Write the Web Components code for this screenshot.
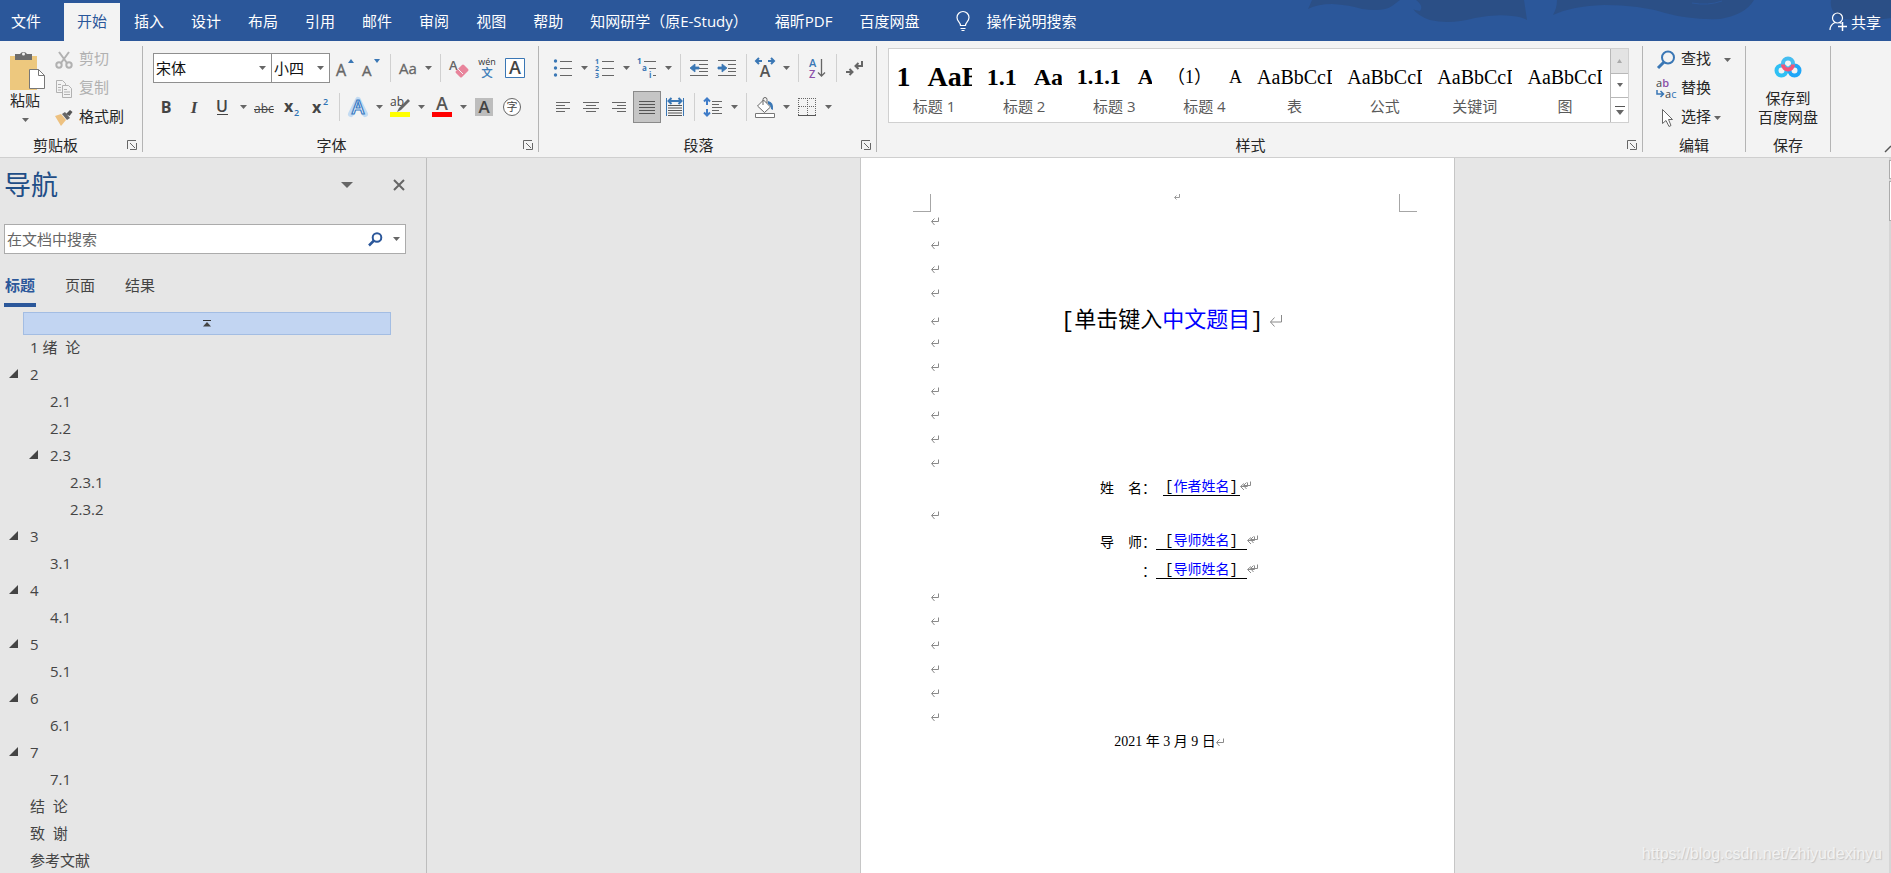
<!DOCTYPE html>
<html lang="zh-CN">
<head>
<meta charset="utf-8">
<title>Word</title>
<style>
  html, body { margin: 0; height: 100%; }
  body { overflow: hidden; font: 15px/20px "Open Sans", "Noto Sans CJK SC", sans-serif; color: #262626; background: #e6e6e6; }
</style>
</head>
<body>
<word-app></word-app>

<script>
const ARROW = '<path d="M0 0h7L3.5 4z" fill="#666"/>';

/* Icon drawings: [width, height, markup] */
const ICONS = {
  arrow: [7, 4, ARROW],
  paste: [36, 40, '<path d="M0 6h27v34H0z" fill="#edc87e"/><path d="M5 4h5a4 4 0 0 1 7 0h5v6H5z" fill="#6d6d6d"/><circle cx="13.500" cy="4" r="1.500" fill="#f3f3f3"/><path d="M19.500 19.500h9l6 6v13h-15z" fill="#fff" stroke="#777"/><path d="M28.500 19.500v6h6" fill="none" stroke="#777"/>'],
  cut: [18, 18, '<g fill="none" stroke="#b1b1b1" stroke-width="2"><path d="M4 1l8 11M14 1L6 12"/><circle cx="4" cy="14" r="2.700"/><circle cx="14" cy="14" r="2.700"/></g>'],
  copy: [18, 18, '<g fill="#f3f3f3" stroke="#b1b1b1"><path d="M1.500.5h6l3 3v9h-9z"/><path d="M7.500 5.500h6l3 3v9h-9z"/><path d="M3 4.500h3M3 7.500h3M3 10h3M9 9.500h3M9 12h6M9 14.500h6"/></g>'],
  brush: [18, 16, '<path d="M0 6l6-2 5 6-5 6z" fill="#edc180"/><path d="M7 4l3-2 5 6-3 2z" fill="#666"/><path d="M11 4l4-4 2.500 2-3 4z" fill="#555"/>'],
  grow: [20, 20, '<text x="0" y="18" font-size="16" fill="#666" stroke="#666" stroke-width=".4">A</text><path d="M12 5h6l-3-4z" fill="#3a77b5"/>'],
  shrink: [20, 20, '<text x="0" y="18" font-size="15" fill="#666" stroke="#666" stroke-width=".4">A</text><path d="M12 1h6l-3 4z" fill="#3a77b5"/>'],
  aa: [22, 20, '<text x="2" y="16" font-size="15" fill="#666" stroke="#666" stroke-width=".3">Aa</text>'],
  eraser: [20, 20, '<text x="0" y="12" font-size="13" font-weight="600" fill="#666">A</text><path d="M8 14l6-6 4 4-6 6z" fill="#e8849b" stroke="#e8849b" stroke-width="3" stroke-linejoin="round"/><path d="M8.500 10.500l5.500 5.500" stroke="#f3f3f3"/>'],
  pinyin: [20, 22, '<text x="10" y="8" text-anchor="middle" font-size="9" fill="#333">wén</text><text x="10" y="20" text-anchor="middle" font-size="11" fill="#2f74b5" stroke="#2f74b5" stroke-width=".3">文</text>'],
  boxa: [20, 20, '<path d="M.5.5h19v19H.500z" fill="#fff" stroke="#3a77b5"/><text x="10" y="16" text-anchor="middle" font-size="18" font-weight="600" fill="#444">A</text>'],
  bold: [20, 20, '<text x="10" y="16" text-anchor="middle" font-size="16" font-weight="700" fill="#444">B</text>'],
  italic: [20, 20, '<text x="10" y="16" text-anchor="middle" font-size="17" font-weight="700" font-style="italic" font-family="Liberation Serif" fill="#444">I</text>'],
  under: [20, 20, '<text x="10" y="15" text-anchor="middle" font-size="16" font-weight="600" fill="#444">U</text><path d="M5 17.500h11" stroke="#444"/>'],
  strike: [22, 20, '<text x="11" y="16" text-anchor="middle" font-size="12" fill="#444">abc</text><path d="M1 12.500h20" stroke="#444"/>'],
  sub: [20, 20, '<text x="2" y="15" font-size="16" font-weight="700" fill="#444">x</text><text x="12" y="19" font-size="9" font-weight="600" fill="#2f74b5">2</text>'],
  sup: [20, 20, '<text x="2" y="16" font-size="16" font-weight="700" fill="#444">x</text><text x="13" y="8" font-size="9" font-weight="600" fill="#2f74b5">2</text>'],
  effect: [22, 22, '<path d="M4 18L11 4l7 14" fill="none" stroke="#c3dbf2" stroke-width="6" stroke-linejoin="round" stroke-linecap="round"/><text x="11" y="18" text-anchor="middle" font-size="19" font-weight="600" fill="#fff" stroke="#3b7cc4" stroke-width="1.200">A</text>'],
  marker: [22, 22, '<text x="1" y="10" font-size="12" fill="#444">ab</text><path d="M19 3l2 2-9 9-4 2 2-4z" fill="#666"/><path d="M1 16h20v5H1z" fill="#ff0"/>'],
  color: [22, 22, '<text x="11" y="14" text-anchor="middle" font-size="18" font-weight="600" fill="#555">A</text><path d="M1 16h20v5H1z" fill="red"/>'],
  shade: [18, 18, '<path d="M0 0h18v18H0z" fill="#bdbdbd"/><text x="9" y="15" text-anchor="middle" font-size="17" font-weight="600" fill="#444">A</text>'],
  circled: [20, 20, '<circle cx="10" cy="10" r="8.500" fill="#fff" stroke="#666"/><text x="10" y="14" text-anchor="middle" font-size="11" fill="#444">字</text>'],
  bullets: [20, 20, '<g fill="#3a77b5"><circle cx="2.500" cy="3" r="1.700"/><circle cx="2.500" cy="10" r="1.700"/><circle cx="2.500" cy="17" r="1.700"/></g><path d="M7 3.500h12M7 10.500h12M7 17.500h12" stroke="#666"/>'],
  numbers: [20, 20, '<g font-size="7" font-weight="700" fill="#3a77b5"><text x="0" y="6">1</text><text x="0" y="13">2</text><text x="0" y="20">3</text></g><path d="M7 3.500h12M7 10.500h12M7 17.500h12" stroke="#666"/>'],
  multi: [20, 20, '<g font-size="8" font-weight="700" fill="#3a77b5"><text x="0" y="6">1</text><text x="5" y="13">a</text><text x="12" y="20">i</text></g><path d="M7 3.500h12M12 10.500h7M16 17.500h3" stroke="#666"/>'],
  outdent: [20, 20, '<path d="M1 2.500h18M10 6.500h9M10 10.500h9M10 13.500h9M1 17.500h18" stroke="#666"/><path d="M1 10l5-4v3h4v2H6v3z" fill="#3a77b5" stroke="#3a77b5" stroke-width=".8"/>'],
  indent: [20, 20, '<path d="M1 2.500h18M11 6.500h8M11 10.500h8M11 13.500h8M1 17.500h18" stroke="#666"/><path d="M10 10L5 6v3H1v2h4v3z" fill="#3a77b5" stroke="#3a77b5" stroke-width=".8"/>'],
  cnlayout: [22, 20, '<text x="11" y="19" text-anchor="middle" font-size="16" font-weight="600" fill="#555">A</text><path d="M5 0L2 3l3 3M2 3h6M17 0l3 3-3 3M20 3h-6" fill="none" stroke="#3a77b5" stroke-width="2"/>'],
  sort: [20, 22, '<text x="2" y="10" font-size="11" font-weight="600" fill="#3a77b5">A</text><text x="2" y="21" font-size="11" font-weight="600" fill="#8b4fa8">Z</text><path d="M14.500 2v17M11 15.500l3.500 3.500 3.500-3.500" fill="none" stroke="#666" stroke-width="1.300"/>'],
  marks: [20, 18, '<path d="M17 2v5h-6M13.500 4l-3 3 3 3M1 13h6M4.500 10l3 3-3 3" fill="none" stroke="#666" stroke-width="2"/>'],
  left: [20, 20, '<path d="M3 5.500h14M3 8.500h9M3 11.500h14M3 14.500h9" stroke="#666"/>'],
  center: [20, 20, '<path d="M2 5.500h16M5 8.500h10M2 11.500h16M5 14.500h10" stroke="#666"/>'],
  right: [20, 20, '<path d="M3 5.500h14M8 8.500h9M3 11.500h14M8 14.500h9" stroke="#666"/>'],
  justify: [20, 20, '<path d="M2 4.500h16M2 7.500h16M2 10.500h16M2 13.500h16M2 16.500h16" stroke="#555"/>'],
  spread: [20, 20, '<path d="M1.500 1v18M18.500 1v18" stroke="#3a77b5"/><path d="M3 4h14M6.500 1L3.500 4l3 3M13.500 1l3 3-3 3" fill="none" stroke="#3a77b5" stroke-width="2"/><path d="M3 8.500h14M3 11h14M3 13.500h14M3 16h14M3 18.500h14" stroke="#555"/>'],
  spacing: [20, 20, '<path d="M4 1v7M4 12v7M1 4.500L4 1.500l3 3M1 15.500l3 3 3-3" fill="none" stroke="#3f7cc8" stroke-width="2"/><path d="M9 4.500h10M9 7.500h7M9 10.500h10M9 13.500h7M9 16.500h10" stroke="#666"/>'],
  fill: [22, 22, '<path d="M9.500 4l7 7-6 5.500-7-6.500z" fill="#fff" stroke="#666"/><path d="M9 9V3.500a2 2 0 0 1 4 0V7" fill="none" stroke="#666"/><path d="M14 5q6 1 5 9l-2-1q0-4-3-5z" fill="#3a77b5"/><path d="M1.500 17.500h19v4h-19z" fill="#fff" stroke="#777"/>'],
  borders: [20, 20, '<path d="M2 1.500h17M1.500 1v17M18.500 1v17M10.500 1v17M2 9.500h17" stroke="#666" stroke-dasharray="1 1"/><path d="M1 18.500h18" stroke="#555"/>'],
  find: [20, 20, '<circle cx="12" cy="7.500" r="6" fill="none" stroke="#3a77b5" stroke-width="2"/><path d="M8 12l-6 6" stroke="#3a77b5" stroke-width="3"/>'],
  replace: [20, 20, '<text x="0" y="8" font-size="11" fill="#444">a<tspan fill="#8b4fa8" font-weight="600">b</tspan></text><text x="9" y="19" font-size="11" fill="#444">a<tspan fill="#2f74b5">c</tspan></text><path d="M1 11v4h6M4.500 12l3 3-3 3" fill="none" stroke="#3a77b5" stroke-width="1.500"/>'],
  select: [20, 20, '<path d="M6.500 1.500v14l3.500-3 3 6 2-1-2.500-6h4z" fill="#fff" stroke="#666"/>'],
  netdisk: [28, 22, '<g fill="none" stroke-width="4"><circle cx="7.500" cy="14.500" r="5" stroke="#2fc0f4"/><circle cx="20.500" cy="14.500" r="5" stroke="#1fa6f8"/><circle cx="14" cy="7.500" r="5" stroke="#45bdf0"/><path d="M9 8.500a5 5 0 0 0 10 0" stroke="#f25478"/></g>'],
  bulb: [14, 20, '<path d="M4.500 14.500C4.500 11 1 10.500 1 6.500a6 6 0 0 1 12 0c0 4-3.500 4.500-3.500 8zM4.500 17.500h5M5.500 19.500h3" fill="none" stroke="#fff" stroke-width="1.200"/>'],
  share: [18, 20, '<circle cx="8.500" cy="6" r="5" fill="none" stroke="#fff" stroke-width="1.200"/><path d="M1 18c0-4 2-6 5-7.500M10.500 10.500l2 1" fill="none" stroke="#fff" stroke-width="1.200"/><path d="M9 14.500h9M13.500 10v9" stroke="#fff" stroke-width="1.500"/>'],
  launcher: [10, 10, '<path d="M.5 9V.5H9M3 3l5 5M9.500 3v6.500H3" fill="none" stroke="#666"/>'],
  navarrow: [12, 6, '<path d="M0 0h12L6 6z" fill="#666"/>'],
  close: [12, 12, '<path d="M1 1l10 10M11 1L1 11" stroke="#666" stroke-width="2"/>'],
  search: [15, 15, '<circle cx="9" cy="5.500" r="4.300" fill="none" stroke="#2b579a" stroke-width="2"/><path d="M6 8.500L1 13.500" stroke="#2b579a" stroke-width="2.500"/>'],
  totop: [8, 7, '<path d="M0 .5h8" stroke="#333"/><path d="M0 6.500L4 2l4 4.500z" fill="#444"/>'],
  twisty: [10, 10, '<path d="M0 9L9 0v9z" fill="#444"/>'],
  ret: [9, 9, '<path d="M7.500.5v4H1M3.500 1.500l-3 3 3 3.500" fill="none" stroke="#8a8a8a"/>'],
  retbig: [14, 14, '<path d="M12.500 1v7H1.500M5.500 3.500L1.500 8l4 4.500" fill="none" stroke="#8a8a8a"/>'],
  retsmall: [6, 6, '<path d="M5.500 0v3.500H1M2.500 1.500l-2 2 2 2" fill="none" stroke="#9a9a9a"/>'],
  ret2: [11, 10, '<path d="M7.500 1.500v4H1M4 2.500l-3.500 3L4 9M10.500.5v4H4M6.500 1.500l-3 3 3 3.500" fill="none" stroke="#8a8a8a"/>'],
  tickup: [5, 4, '<path d="M0 4h5L2.500 0z" fill="#aaa"/>'],
  tickdown: [6, 4, '<path d="M0 0h6L3 4z" fill="#666"/>'],
  tickmore: [10, 9, '<path d="M0 .5h10" stroke="#555"/><path d="M1 4h8L5 9z" fill="#666"/>'],
  chevron: [6, 6, '<path d="M0 6L6 0" stroke="#555" stroke-width="1.500"/>']
};
const icon = n => { const [w, h, d] = ICONS[n]; return `<svg width="${w}" height="${h}" viewBox="0 0 ${w} ${h}" aria-hidden="true">${d}</svg>`; };

const BASE = `*{box-sizing:border-box}svg{display:block;flex:none;overflow:visible}
button{font:inherit;color:inherit;background:none;border:0;margin:0;padding:0;display:flex;align-items:center;justify-content:center}
a{color:inherit;text-decoration:none}`;

function define(tag, css, html) {
  customElements.define(tag, class extends HTMLElement {
    constructor() { super(); this.attachShadow({ mode: 'open' }); }
    connectedCallback() {
      this.shadowRoot.innerHTML = `<style>${BASE}${css}</style>` + (typeof html === 'function' ? html(this) : html);
    }
  });
}
const at = (el, n) => el.getAttribute(n) || '';

/* Small ribbon controls */
define('tool-button', `:host{display:block;width:26px;height:30px}
:host([icon=arrow]){width:12px}
:host([narrow]){width:24px}
button{width:100%;height:100%}
:host([pressed]) button{background:#c5c5c5;outline:1px solid #8a8a8a}`,
  el => `<button type="button" aria-label="${at(el, 'label')}">${icon(at(el, 'icon'))}</button>`);
define('tool-sep', `:host{display:flex;justify-content:center;width:8px;height:28px}i{width:1px;background:#d0d0d0}`, '<i></i>');
define('tool-text', `:host{display:block;height:27px;white-space:nowrap}
button{height:100%;gap:5px}
:host([disabled]){color:#b1b1b1}
.i{width:20px;display:flex;justify-content:center}
.t{padding-bottom:3px}
.a{margin-left:var(--arrow-gap,0)}`,
  el => `<button type="button"${el.hasAttribute('disabled') ? ' disabled' : ''}><span class="i">${icon(at(el, 'icon'))}</span><span class="t"><slot></slot></span>${el.hasAttribute('menu') ? `<span class="a">${icon('arrow')}</span>` : ''}</button>`);
define('combo-box', `:host{display:block;position:relative;height:30px}
select{appearance:none;font:inherit;color:#111;width:100%;height:100%;border:1px solid #8f8f8f;border-radius:0;background:#fff;padding:0 2px;margin:0;display:block}
svg{position:absolute;right:6px;top:13px;pointer-events:none}`,
  el => `<select aria-label="${at(el, 'label')}"><option>${at(el, 'value')}</option></select>${icon('arrow')}`);

define('ribbon-group', `:host{display:flex;flex-direction:column;border-right:1px solid #b4b4b4}
.body{flex:1;display:flex;min-height:0}
footer{display:flex;align-items:center;height:14px;line-height:14px}
footer span{flex:1;text-align:center}
footer button{width:18px;height:14px;padding-right:2px}
:host([flush]) footer span{padding-right:13px}`,
  el => `<div class="body"><slot></slot></div><footer><span>${at(el, 'name')}</span>${el.hasAttribute('dialog') ? `<button type="button" aria-label="${at(el, 'name')}设置">${icon('launcher')}</button>` : ''}</footer>`);

/* Tab strip */
define('tab-strip', `:host{display:flex;height:41px;background:#2b579a;color:#fff;position:relative;overflow:hidden}
.deco{position:absolute;right:0;top:0}
nav{display:flex;gap:1px;padding-top:3px;position:relative}
nav a{padding:0 13px;line-height:36px;white-space:nowrap}
nav a:first-child{padding:0 11px;margin-right:11px}
nav a.on{background:#f3f3f3;color:#2b579a}
.help,.share{display:flex;align-items:center;gap:16px;padding-top:1px;position:relative}
.help{margin-left:24px}
.share{margin-left:auto;gap:4px;padding-right:10px;padding-top:3px}`,
  () => `<svg class="deco" width="591" height="41" viewBox="1300 0 591 41" fill="#2b4f86"><path d="M1312 0Q1310 5 1308 9Q1318 4 1332 4Q1350 5 1362 9Q1384 12 1392 6L1400 0zM1416 0Q1424 6 1420 11Q1414 10 1413 9Q1418 16 1430 20Q1450 25 1475 18Q1495 14 1512 16Q1522 17 1527 20L1524 0zM1557 0Q1557 8 1553 15Q1572 6 1604 5Q1640 5 1665 13Q1690 20 1720 19Q1745 15 1754 0zM1831 0Q1829 14 1845 19Q1868 22 1891 18V0z"/><path d="M1692 3q16 3 30-2" stroke="#2b579a" stroke-width="1" fill="none"/></svg>
<nav>${['文件', '开始', '插入', '设计', '布局', '引用', '邮件', '审阅', '视图', '帮助', '知网研学（原E-Study）', '福昕PDF', '百度网盘'].map((t, i) => `<a href="#"${i === 1 ? ' class="on"' : ''}>${t}</a>`).join('')}</nav>
<button class="help" type="button">${icon('bulb')}<span>操作说明搜索</span></button>
<button class="share" type="button">${icon('share')}<span>共享</span></button>`);

/* Style gallery */
const STYLES = [['标题 1', 'b28', '1', 'AaB'], ['标题 2', 'b24', '1.1', 'Aa'], ['标题 3', 'b22', '1.1.1', 'A'], ['标题 4', 'r18', '（1）', 'A'], ['表', 'r20', '', 'AaBbCcD'], ['公式', 'r20', '', 'AaBbCcD'], ['关键词', 'r20', '', 'AaBbCcD'], ['图', 'r20', '', 'AaBbCcD']];
define('style-gallery', `:host{display:flex;flex:1;height:75px;border:1px solid #d0d0d0;background:#fff}
.items{flex:1;display:grid;grid-template-columns:repeat(8,1fr)}
.items button{display:block;padding:4px 7px 0}
.pv{display:flex;gap:17px;align-items:center;width:75px;height:36px;margin:0 auto;overflow:hidden;white-space:nowrap;line-height:36px;color:#000;font-family:"Liberation Serif","Noto Sans CJK SC",serif}
.b28{font-size:28px;font-weight:700}.b24{font-size:24px;font-weight:700}.b22{font-size:22px;font-weight:700}.r18{font-size:18px}.r20{font-size:20px}
.cap{display:block;line-height:22px;color:#5a5a5a}
.side{width:18px;display:grid;grid-template-rows:1fr 1fr 1fr;gap:1px;background:#b8b8b8;padding-left:1px}
.side button{background:#fff}.side button:first-child{background:#e3e3e3}`,
  () => `<div class="items">${STYLES.map(([c, k, n, t]) => `<button type="button"><span class="pv ${k}">${n ? `<span>${n}</span>` : ''}<span>${t}</span></span><span class="cap">${c}</span></button>`).join('')}</div>
<div class="side"><button type="button" aria-label="上一行">${icon('tickup')}</button><button type="button" aria-label="下一行">${icon('tickdown')}</button><button type="button" aria-label="其他">${icon('tickmore')}</button></div>`);

const tools = list => list.split(' ').map(n => n === '|' ? '<tool-sep></tool-sep>' : `<tool-button icon="${n.replace(/[*!]/, '')}" label="${n.replace(/[*!]/, '')}"${n.endsWith('*') ? ' narrow' : ''}${n.endsWith('!') ? ' pressed' : ''}></tool-button>`).join('');

define('ribbon-bar', `:host{display:flex;padding:5px 0;height:117px;background:#f3f3f3;border-bottom:1px solid #cfcfcf}
ribbon-group{flex:none}
.clip{width:143px}.font{width:396px}.para{width:338px}.style{flex:1}.edit{width:103px}.save{width:85px}
.rows{display:flex;flex-direction:column;gap:9px;padding-top:7px}
.row{display:flex;gap:2px;align-items:center}
.font .rows{padding-left:10px}
.para .rows{padding-left:11px}
.combos{display:flex;margin-right:2px}
.combos combo-box{width:59px;margin-left:-1px}.combos combo-box:first-child{width:119px;margin-left:0}
.paste{flex-direction:column;justify-content:flex-start;width:50px;padding-top:4px}
.paste svg:first-child{margin-left:6px}
.paste svg:last-child{margin-top:8px}
.col{display:flex;flex-direction:column;gap:2px;padding-left:4px}
.edit .col{padding-left:13px}.edit tool-text:first-child{--arrow-gap:8px}
.style-body{display:flex;flex:1;padding:2px 13px 0 11px}
.disk{flex:1;flex-direction:column;justify-content:flex-start;padding-top:10px;line-height:19px;gap:11px}
.end{width:60px;display:flex;align-items:flex-end;justify-content:flex-end}`,
  () => `<ribbon-group class="clip" name="剪贴板" dialog flush>
  <button class="paste" type="button">${icon('paste')}<span>粘贴</span>${icon('arrow')}</button>
  <div class="col"><tool-text icon="cut" disabled>剪切</tool-text><tool-text icon="copy" disabled>复制</tool-text><tool-text icon="brush">格式刷</tool-text></div>
</ribbon-group>
<ribbon-group class="font" name="字体" dialog><div class="rows">
  <div class="row"><div class="combos"><combo-box label="字体" value="宋体"></combo-box><combo-box label="字号" value="小四"></combo-box></div>${tools('grow* shrink* | aa* arrow | eraser pinyin boxa')}</div>
  <div class="row">${tools('bold italic under arrow strike sub sup | effect arrow marker arrow color arrow shade circled')}</div>
</div></ribbon-group>
<ribbon-group class="para" name="段落" dialog><div class="rows">
  <div class="row">${tools('bullets arrow numbers arrow multi arrow | outdent indent | cnlayout arrow | sort | marks')}</div>
  <div class="row">${tools('left center right justify! spread | spacing arrow | fill arrow borders arrow')}</div>
</div></ribbon-group>
<ribbon-group class="style" name="样式" dialog><div class="style-body"><style-gallery></style-gallery></div></ribbon-group>
<ribbon-group class="edit" name="编辑"><div class="col"><tool-text icon="find" menu>查找</tool-text><tool-text icon="replace">替换</tool-text><tool-text icon="select" menu style="--arrow-gap:-2px">选择</tool-text></div></ribbon-group>
<ribbon-group class="save" name="保存"><button class="disk" type="button">${icon('netdisk')}<span>保存到<br>百度网盘</span></button></ribbon-group>
<button class="end" type="button" aria-label="折叠功能区">${icon('chevron')}</button>`);

/* Navigation pane */
const TREE = [[1, '1 绪  论'], [1, '2', 1], [2, '2.1'], [2, '2.2'], [2, '2.3', 1], [3, '2.3.1'], [3, '2.3.2'], [1, '3', 1], [2, '3.1'], [1, '4', 1], [2, '4.1'], [1, '5', 1], [2, '5.1'], [1, '6', 1], [2, '6.1'], [1, '7', 1], [2, '7.1'], [1, '结  论'], [1, '致  谢'], [1, '参考文献']];
define('nav-pane', `:host{display:block;width:427px;flex:none;border-right:1px solid #bdbdbd;color:#444;overflow:hidden}
header{display:flex;align-items:center;height:54px;padding:0 21px 0 4px}
h2{flex:1;margin:0;font-size:27px;line-height:40px;font-weight:400;color:#1f4e87}
header button+button{margin-left:40px}
.search{display:flex;align-items:center;width:402px;height:30px;margin:12px 0 0 4px;border:1px solid #ababab;background:#fff;padding-right:5px}
input{flex:1;min-width:0;border:0;outline:0;padding:0 2px;font:inherit;background:none}
input::placeholder{color:#666;opacity:1}
.search button+button{margin-left:10px}
.tabs{display:flex;gap:28px;padding:21px 0 0 4px}
.tabs a{line-height:20px;padding:0 1px 8px;border-bottom:4px solid transparent}
.tabs a.on{color:#2b579a;font-weight:700;border-color:#2b579a}
.top{width:368px;height:23px;margin:5px 0 0 23px;background:#c2d5f2;border:1px solid #a3bde3}
ul{list-style:none;margin:-2px 0 0;padding:0}
li{display:flex;align-items:center;height:27px;white-space:pre}
li button,li i{width:10px;margin-right:11px}
.l1{padding-left:9px}.l2{padding-left:29px}.l3{padding-left:49px}`,
  () => `<header><h2>导航</h2><button type="button" aria-label="选项">${icon('navarrow')}</button><button type="button" aria-label="关闭">${icon('close')}</button></header>
<div class="search"><input type="text" aria-label="搜索" placeholder="在文档中搜索"><button type="button" aria-label="搜索">${icon('search')}</button><button type="button" aria-label="搜索选项">${icon('arrow')}</button></div>
<div class="tabs"><a href="#" class="on">标题</a><a href="#">页面</a><a href="#">结果</a></div>
<button class="top" type="button" aria-label="转到开头">${icon('totop')}</button>
<ul>${TREE.map(([l, t, x]) => `<li class="l${l}">${x ? `<button type="button" aria-label="折叠">${icon('twisty')}</button>` : '<i></i>'}<a href="#">${t}</a></li>`).join('')}</ul>`);

/* One line of the document: left paragraph mark, centred content, trailing mark */
define('doc-line', `:host{display:grid;grid-template-columns:1fr auto 1fr;align-items:center;height:24px}`,
  el => `<span>${el.hasAttribute('mark') ? icon('ret') : ''}</span><slot></slot><span>${at(el, 'end') ? icon(at(el, 'end')) : ''}</span>`);
define('form-line', `:host{display:flex;align-items:center;height:24px;padding-left:168px;color:#000;font-size:14px;line-height:16px}
.label{width:57px;text-align:right;white-space:pre}
.field{width:91px;height:17px;margin-top:-4px;text-align:center;border-bottom:1px solid #000;color:#00f;white-space:nowrap}
:host([short]) .field{width:77px;margin-left:7px}
b{font:14px/16px "Liberation Mono",monospace;color:#000}
svg{margin-top:-6px}`,
  el => `<span class="label">${at(el, 'label')}</span><span class="field"><b>[</b><slot></slot><b>]</b></span>${icon('ret2')}`);

define('doc-page', `:host{box-sizing:border-box;display:block;width:595px;background:#fff;border:1px solid #c6c6c6;border-width:0 1px;padding:36px 37px 0 52px}
.head{display:grid;grid-template-columns:18px 1fr 18px;height:18px}
.head i{border:0 solid #a6a6a6}
.head i:first-child{border-width:0 1px 1px 0}.head i:last-child{border-width:0 0 1px 1px}
.head span{display:flex;justify-content:center;padding-left:23px}
.text{margin:-3px 18px 0;font-family:"Liberation Serif","Noto Sans CJK SC",serif;color:#000}
.title{box-sizing:border-box;height:26px;padding-top:2px;font-size:22px;line-height:26px}
.title b{font:22px/26px "Liberation Mono",monospace}
.title em{font-style:normal;color:#00f}
.r28{height:28px}.r32{height:32px}.r26{height:26px}.date{height:26px;font-size:14px}`,
  () => {
    const blank = n => '<doc-line mark></doc-line>'.repeat(n);
    return `<div class="head"><i></i><span>${icon('retsmall')}</span><i></i></div>
<div class="text">${blank(4)}<doc-line class="title" mark end="retbig"><span><b>[</b>单击键入<em>中文题目</em><b>]</b>&nbsp;</span></doc-line>${blank(6)}
<form-line class="r28" label="姓　名：" short>作者姓名</form-line>${blank(1)}
<form-line class="r32" label="导　师：">导师姓名</form-line>
<form-line class="r26" label="：">导师姓名</form-line>${blank(6)}
<doc-line class="date" end="ret"><span>2021 年 3 月 9 日</span></doc-line></div>`;
  });

define('scroll-strip', `:host{display:block;width:2px;flex:none;background:#d6d6d6;padding-top:2px}
i{display:block;height:19px;border:1px solid #ababab;border-right:0;background:#fff;margin-bottom:2px}i+i{height:40px}`, '<i></i><i></i>');

define('word-app', `:host{display:flex;flex-direction:column;height:100vh;position:relative;overflow:hidden}
tab-strip,ribbon-bar{flex:none;box-sizing:border-box}
main{flex:1;display:flex;min-height:0}
nav-pane{box-sizing:border-box}
.canvas{flex:1;display:flex;justify-content:center;overflow:hidden;padding-right:1px}
.mark{position:absolute;right:9px;bottom:9px;font:16px/20px "Liberation Sans",sans-serif;color:#f2f2f2;text-shadow:1px 1px 1px #c4c4c4}`,
  `<tab-strip></tab-strip><ribbon-bar></ribbon-bar>
<main><nav-pane></nav-pane><div class="canvas"><doc-page></doc-page></div><scroll-strip></scroll-strip></main>
<div class="mark">https://blog.csdn.net/zhiyudexinyu</div>`);
</script>
</body>
</html>
